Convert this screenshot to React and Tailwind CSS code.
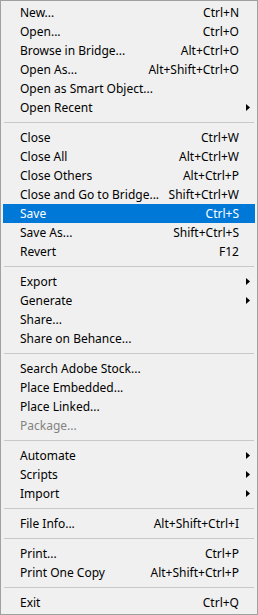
import React from 'react';

const groups = [
  [
    { label: 'New...', shortcut: 'Ctrl+N' },
    { label: 'Open...', shortcut: 'Ctrl+O' },
    { label: 'Browse in Bridge...', shortcut: 'Alt+Ctrl+O' },
    { label: 'Open As...', shortcut: 'Alt+Shift+Ctrl+O' },
    { label: 'Open as Smart Object...' },
    { label: 'Open Recent', submenu: true },
  ],
  [
    { label: 'Close', shortcut: 'Ctrl+W' },
    { label: 'Close All', shortcut: 'Alt+Ctrl+W' },
    { label: 'Close Others', shortcut: 'Alt+Ctrl+P' },
    { label: 'Close and Go to Bridge...', shortcut: 'Shift+Ctrl+W' },
    { label: 'Save', shortcut: 'Ctrl+S', active: true },
    { label: 'Save As...', shortcut: 'Shift+Ctrl+S' },
    { label: 'Revert', shortcut: 'F12' },
  ],
  [
    { label: 'Export', submenu: true },
    { label: 'Generate', submenu: true },
    { label: 'Share...' },
    { label: 'Share on Behance...' },
  ],
  [
    { label: 'Search Adobe Stock...' },
    { label: 'Place Embedded...' },
    { label: 'Place Linked...' },
    { label: 'Package...', disabled: true },
  ],
  [
    { label: 'Automate', submenu: true },
    { label: 'Scripts', submenu: true },
    { label: 'Import', submenu: true },
  ],
  [{ label: 'File Info...', shortcut: 'Alt+Shift+Ctrl+I' }],
  [
    { label: 'Print...', shortcut: 'Ctrl+P' },
    { label: 'Print One Copy', shortcut: 'Alt+Shift+Ctrl+P' },
  ],
  [{ label: 'Exit', shortcut: 'Ctrl+Q' }],
];

const Arrow = () => (
  <svg width="4" height="7" viewBox="0 0 4 7" className="block">
    <polygon points="0,0 4,3.5 0,7" fill="#000" />
  </svg>
);

const MenuRow = ({ item }) => (
  <div
    className={`flex items-center h-[19px] pl-[17px] whitespace-nowrap ${
      item.active ? 'bg-[#0078d7] text-white' : item.disabled ? 'text-[#838383]' : 'text-black'
    }`}
  >
    <span className="flex-1">{item.label}</span>
    {item.shortcut && <span>{item.shortcut}</span>}
    <span className="w-[16px] flex justify-start pl-[7px]">{item.submenu && <Arrow />}</span>
  </div>
);

export default function App() {
  return (
    <div
      className="w-[258px] h-[615px] bg-[#f0f0f0] border border-[#a0a0a0] p-[2px] text-[12px] leading-[19px]"
      style={{ fontFamily: '"Noto Sans", "Open Sans", sans-serif' }}
    >
      {groups.map((group, gi) => (
        <div key={gi}>
          {gi > 0 && (
            <div className="h-[11px] flex items-center px-px">
              <div className="h-px w-full bg-[#c9c9c9]" />
            </div>
          )}
          {group.map((item) => (
            <MenuRow key={item.label} item={item} />
          ))}
        </div>
      ))}
    </div>
  );
}
